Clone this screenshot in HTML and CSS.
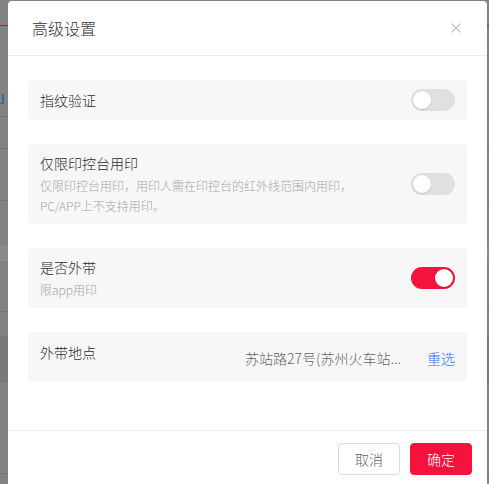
FILE: index.html
```html
<!DOCTYPE html>
<html lang="zh-CN">
<head>
<meta charset="utf-8">
<title>高级设置</title>
<link rel="stylesheet" href="styles.css">
</head>
<body>
<div class="page">
  <div class="bg-row r1"></div>
  <div class="bg-row r2"><span class="bg-link"></span></div>
  <div class="bg-row r3"></div>
  <div class="bg-row r4"></div>
  <div class="bg-row r5"></div>
  <div class="bg-row band-light"></div>
  <div class="bg-row r6"></div>
  <div class="bg-row r7"></div>
  <div class="bg-row band-dark"></div>
  <div class="bg-row r8"></div>
</div>

<div class="modal">
  <div class="modal-header">
    <span class="modal-title">高级设置</span>
    <button class="modal-close" aria-label="关闭">
      <svg width="10" height="10" viewBox="0 0 10 10"><path d="M0.7 0.7L9.3 9.3M9.3 0.7L0.7 9.3" stroke="#b8b8b8" stroke-width="1.2" fill="none"/></svg>
    </button>
  </div>
  <div class="modal-body">
    <div class="card card-row">
      <div class="card-main"><div class="card-title">指纹验证</div></div>
      <span class="switch"></span>
    </div>
    <div class="card card-row">
      <div class="card-main">
        <div class="card-title">仅限印控台用印</div>
        <div class="card-desc">仅限印控台用印，用印人需在印控台的红外线范围内用印，<br>PC/APP上不支持用印。</div>
      </div>
      <span class="switch"></span>
    </div>
    <div class="card card-row">
      <div class="card-main">
        <div class="card-title">是否外带</div>
        <div class="card-desc">限app用印</div>
      </div>
      <span class="switch on"></span>
    </div>
    <div class="card card-place">
      <div class="card-title">外带地点</div>
      <div class="place">
        <span class="place-text">苏站路27号(苏州火车站...</span>
        <a class="place-link" href="#">重选</a>
      </div>
    </div>
  </div>
  <div class="modal-footer">
    <button class="btn btn-default">取消</button>
    <button class="btn btn-primary">确定</button>
  </div>
</div>
</body>
</html>
```

FILE: styles.css
```css
* { box-sizing: border-box; }

html, body {
  margin: 0;
  padding: 0;
  height: 100%;
}

body {
  background: #828282;
  font-family: "Noto Sans CJK SC", "Noto Sans", sans-serif;
  font-weight: 300;
  overflow: hidden;
}

/* masked page behind the dialog */
.page {
  display: flex;
  flex-direction: column;
}
.bg-row { border-bottom: 1px solid #747474; }
.r1 { height: 26px; border-bottom-color: #8c3040; }
.r2 { height: 91px; }
.bg-link {
  display: block;
  width: 4px;
  height: 10px;
  margin-top: 68px;
  border-right: 2px solid #3f6a9a;
  border-bottom: 1px solid #3f6a9a;
}
.r3 { height: 32px; }
.r4 { height: 52px; }
.r5 { height: 44px; border-bottom: none; }
.band-light { height: 16px; background: #8a8a8a; border-bottom: none; }
.r6 { height: 51px; }
.r7 { height: 24px; border-bottom: none; }
.band-dark { height: 47px; background: #7a7a7a; border-bottom: none; }
.r8 { height: 91px; }

/* dialog */
.modal {
  position: fixed;
  top: 1px;
  left: 8px;
  width: 479px;
  background: #fff;
  border-radius: 4px 4px 0 0;
}

.modal-header {
  height: 55px;
  padding: 0 24px;
  border-bottom: 1px solid #ebebeb;
  display: flex;
  align-items: center;
  justify-content: space-between;
}
.modal-title {
  font-size: 16px;
  line-height: 24px;
  color: #333;
}
.modal-close {
  border: none;
  background: none;
  padding: 0;
  width: 10px;
  height: 10px;
  margin-right: 2px;
  display: flex;
  cursor: pointer;
}

.modal-body {
  padding: 24px 20px 48px;
  display: flex;
  flex-direction: column;
  gap: 24px;
}

.card {
  background: #f7f7f7;
  border-radius: 4px;
  padding: 8px 12px;
}
.card-row {
  min-height: 40px;
  display: flex;
  align-items: center;
  justify-content: space-between;
}
.card-title {
  font-size: 14px;
  line-height: 22px;
  color: #2b2b2b;
}
.card-desc {
  margin-top: 2px;
  font-size: 12px;
  line-height: 20px;
  color: #a6a6a6;
}

.switch {
  flex: none;
  width: 44px;
  height: 22px;
  border-radius: 11px;
  background: #e0e0e0;
  display: flex;
  align-items: center;
  padding: 0 2px;
}
.switch::after {
  content: "";
  width: 18px;
  height: 18px;
  border-radius: 50%;
  background: #fff;
  box-shadow: 0 1px 2px rgba(0, 0, 0, 0.12);
}
.switch.on {
  background: #f5123d;
  justify-content: flex-end;
}

.card-place {
  height: 50px;
  padding-top: 9px;
  display: flex;
  align-items: flex-start;
  justify-content: space-between;
}
.place {
  align-self: center;
  display: flex;
  align-items: center;
  gap: 26px;
  font-size: 14px;
  line-height: 22px;
}
.place-text { color: #666; }
.place-link {
  color: #2f6cf6;
  text-decoration: none;
}

.modal-footer {
  border-top: 1px solid #ebebeb;
  padding: 12px 15px 12px;
  display: flex;
  justify-content: flex-end;
  gap: 10px;
}
.btn {
  height: 32px;
  width: 62px;
  border-radius: 4px;
  font-family: inherit;
  font-weight: 300;
  font-size: 14px;
  line-height: 20px;
  padding: 0;
  cursor: pointer;
}
.btn-default {
  background: #fff;
  border: 1px solid #dcdcdc;
  color: #666;
}
.btn-primary {
  background: #f5123d;
  border: 1px solid #f5123d;
  color: #fff;
}
```
